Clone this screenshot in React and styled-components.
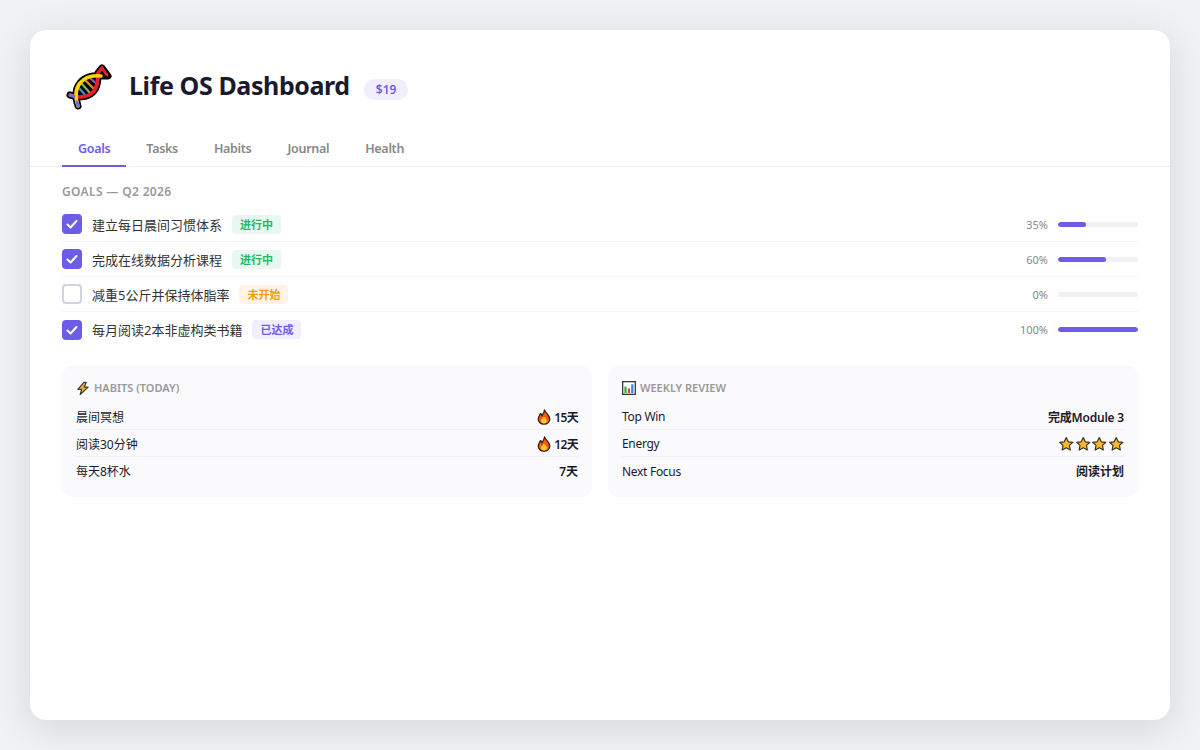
import styled, { createGlobalStyle } from 'styled-components';

const GlobalStyle = createGlobalStyle`
  * {
    box-sizing: border-box;
  }
  html, body {
    margin: 0;
    height: 100%;
  }
  body {
    font-family: 'Noto Sans', 'Noto Sans CJK SC', sans-serif;
    background: #f0f2f5;
    color: #1a1a2e;
  }
`;

const Page = styled.div`
  height: 750px;
  padding: 30px;
  background: #f0f2f5;
`;

const Card = styled.div`
  height: 690px;
  background: #fff;
  border-radius: 16px;
  box-shadow: 0 8px 40px rgba(0, 0, 0, 0.12);
  padding-top: 32px;
`;

const Header = styled.div`
  display: flex;
  align-items: center;
  gap: 14px;
  padding: 0 32px;
  height: 50px;
`;

const LogoWrap = styled.span`
  display: flex;
  flex: none;
  width: 56px;
  margin-top: 2px;
  margin-left: -2px;
  margin-right: -1px;
`;

const Title = styled.h1`
  margin: 0 0 4px;
  font-size: 25px;
  font-weight: 700;
  letter-spacing: -0.4px;
  color: #1a1a2e;
`;

const Price = styled.span`
  margin-top: 4px;
  padding: 2px 12px;
  border-radius: 20px;
  background: #f0eeff;
  color: #6c5ce7;
  font-size: 12px;
  font-weight: 600;
`;

const Tabs = styled.div`
  display: flex;
  margin-top: 20px;
  padding: 0 32px;
  border-bottom: 1px solid #eeeef4;
`;

const Tab = styled.div`
  padding: 8px 16px;
  margin-right: 4px;
  margin-bottom: -1px;
  font-size: 12.5px;
  font-weight: 600;
  letter-spacing: -0.3px;
  color: ${(p) => (p.$active ? '#6c5ce7' : '#888')};
  border-bottom: 2px solid ${(p) => (p.$active ? '#6c5ce7' : 'transparent')};
`;

const Content = styled.div`
  padding: 17px 32px 0;
`;

const SectionLabel = styled.div`
  font-size: 12px;
  font-weight: 600;
  letter-spacing: 0.35px;
  color: #999;
  line-height: 16px;
  margin-bottom: 7px;
`;

const GoalList = styled.div`
  display: flex;
  flex-direction: column;
`;

const GoalRow = styled.div`
  display: flex;
  align-items: center;
  height: 35px;
  border-bottom: 1px solid #f5f5f8;
  &:last-child {
    border-bottom: none;
  }
`;

const Check = styled.span`
  display: flex;
  align-items: center;
  justify-content: center;
  width: 20px;
  height: 20px;
  border-radius: 4px;
  margin-right: 10px;
  background: ${(p) => (p.$done ? '#6c5ce7' : '#fff')};
  border: 2px solid ${(p) => (p.$done ? '#6c5ce7' : '#d0d4e0')};
`;

const GoalName = styled.span`
  font-size: 13px;
  color: #333;
`;

const Status = styled.span`
  margin-left: 10px;
  padding: 2px 8px;
  border-radius: 4px;
  font-size: 11px;
  line-height: 15px;
  font-weight: 600;
  color: ${(p) => p.$color};
  background: ${(p) => p.$bg};
`;

const Percent = styled.span`
  margin-left: auto;
  font-size: 11px;
  color: #888;
`;

const Track = styled.div`
  width: 80px;
  height: 5px;
  margin-left: 10px;
  border-radius: 3px;
  background: #f0f0f5;
  overflow: hidden;
`;

const Fill = styled.div`
  height: 100%;
  border-radius: 3px;
  background: #6c5ce7;
`;

const Panels = styled.div`
  display: grid;
  grid-template-columns: 1fr 1fr;
  gap: 16px;
  margin-top: 19px;
`;

const Panel = styled.div`
  background: #fafafc;
  border-radius: 10px;
  padding: 14px;
  height: 131px;
`;

const PanelTitle = styled.div`
  display: flex;
  align-items: center;
  gap: 4px;
  font-size: 11px;
  font-weight: 600;
  color: #999;
  line-height: 16px;
  margin-bottom: 7px;
`;

const PanelRow = styled.div`
  display: flex;
  justify-content: space-between;
  align-items: center;
  height: 27px;
  padding-top: 1px;
  font-size: 12px;
  color: #1a1a2e;
  border-bottom: 1px solid #f0f0f5;
  &:last-child {
    border-bottom: none;
  }
`;

const RowLabel = styled.span`
  letter-spacing: ${(p) => (p.$tight ? '-0.3px' : '0')};
`;

const PanelValue = styled.span`
  display: flex;
  align-items: center;
  gap: 3px;
  font-weight: 600;
  letter-spacing: ${(p) => p.$spacing || '0'};
`;

const Stars = styled.span`
  display: flex;
`;

const DnaIcon = () => (
  <svg width="56" height="56" viewBox="0 0 56 56" fill="none" strokeLinecap="round" strokeLinejoin="round">
    <path
      d="M10 35 C17 38 27 38 33 32 C38 27 38 19 38 13 L42 8 L48 16 L40 16 C33 15 25 17 20 23 C15 29 15 37 18 46"
      fill="#000"
      stroke="#000"
      strokeWidth="7"
    />
    <g strokeWidth="2.200">
      <path d="M19 28 L26 36" stroke="#3f8fe0" />
      <path d="M22 24 L30 33" stroke="#7cc04a" />
      <path d="M26 21 L34 29" stroke="#f28c28" />
      <path d="M31 19 L37 24" stroke="#8e5bc4" />
    </g>
    <path d="M10 35 C17 38 27 38 33 32 C38 27 38 19 38 13 L42 8" stroke="#e8202a" strokeWidth="3.600" />
    <path d="M42 8 L47 15" stroke="#e8202a" strokeWidth="2.800" />
    <path d="M18 46 C15 37 15 29 20 23 C25 17 33 15 41 16" stroke="#ffd400" strokeWidth="3.600" />
    <path d="M10 35 L14 36.300" stroke="#6a6fd8" strokeWidth="3" />
    <path d="M18 46 L17 42" stroke="#6a6fd8" strokeWidth="3" />
  </svg>
);

const BoltIcon = () => (
  <svg width="14" height="15" viewBox="0 0 15 15">
    <path d="M8.500 1 L2 8.500 L6 8.500 L4.500 14 L13 6 L8.800 6 L11 1 Z" fill="#f7b32b" stroke="#3a3a3a" strokeWidth="1.300" strokeLinejoin="round" />
  </svg>
);

const ChartIcon = () => (
  <svg width="14" height="14" viewBox="0 0 15 15">
    <rect x="0.700" y="0.700" width="13.600" height="13.600" fill="#fff" stroke="#3a3a3a" strokeWidth="1.400" />
    <rect x="2.500" y="6" width="2.500" height="7" fill="#3fae49" />
    <rect x="6.200" y="8" width="2.500" height="5" fill="#e8432e" />
    <rect x="9.800" y="3.500" width="2.500" height="9.500" fill="#2f8fdc" />
  </svg>
);

const FireIcon = () => (
  <svg width="14" height="16" viewBox="0 0 14 16">
    <path d="M7.500 0.800 C8 4 12.800 5.500 12.800 10 C12.800 13.200 10.200 15.200 7 15.200 C3.800 15.200 1.200 13.200 1.200 10 C1.200 7.500 2.800 6.500 3.500 4.500 C4.500 5.200 4.800 6 5 6.800 C6.200 5 7.500 3.200 7.500 0.800 Z" fill="#ef5a14" stroke="#2a1a10" strokeWidth="1.200" strokeLinejoin="round" />
    <path d="M7 7.500 C7.500 9 10 10 10 12 C10 13.500 8.500 14.500 7 14.500 C5.500 14.500 4 13.500 4 12 C4 10 6 9.500 7 7.500 Z" fill="#ffc928" />
  </svg>
);

const StarIcon = () => (
  <svg width="16.500" height="16" viewBox="0 0 16.500 16">
    <path d="M8.250 1.500 L10.250 5.800 L14.850 6.300 L11.450 9.400 L12.350 14 L8.250 11.700 L4.150 14 L5.050 9.400 L1.650 6.300 L6.250 5.800 Z" fill="#fdb92c" stroke="#3a3226" strokeWidth="1.200" strokeLinejoin="round" />
  </svg>
);

const goals = [
  { name: '建立每日晨间习惯体系', status: '进行中', tone: 'green', pct: 35, done: true },
  { name: '完成在线数据分析课程', status: '进行中', tone: 'green', pct: 60, done: true },
  { name: '减重5公斤并保持体脂率', status: '未开始', tone: 'orange', pct: 0, done: false },
  { name: '每月阅读2本非虚构类书籍', status: '已达成', tone: 'purple', pct: 100, done: true },
];

const tones = {
  green: { color: '#22b866', bg: '#e8f8f0' },
  orange: { color: '#f39c12', bg: '#fff3e8' },
  purple: { color: '#6c5ce7', bg: '#f0eeff' },
};

const tabs = ['Goals', 'Tasks', 'Habits', 'Journal', 'Health'];

export default function App() {
  return (
    <Page>
      <GlobalStyle />
      <Card>
        <Header>
          <LogoWrap><DnaIcon /></LogoWrap>
          <Title>Life OS Dashboard</Title>
          <Price>$19</Price>
        </Header>
        <Tabs>
          {tabs.map((t, i) => (
            <Tab key={t} $active={i === 0}>{t}</Tab>
          ))}
        </Tabs>
        <Content>
          <SectionLabel>GOALS — Q2 2026</SectionLabel>
          <GoalList>
            {goals.map((g) => (
              <GoalRow key={g.name}>
                <Check $done={g.done}>
                  {g.done && (
                    <svg width="14" height="14" viewBox="0 0 14 14" fill="none">
                      <path d="M2.500 7.500l3 3 6-6.500" stroke="#fff" strokeWidth="2" strokeLinecap="round" strokeLinejoin="round" />
                    </svg>
                  )}
                </Check>
                <GoalName>{g.name}</GoalName>
                <Status $color={tones[g.tone].color} $bg={tones[g.tone].bg}>{g.status}</Status>
                <Percent>{g.pct}%</Percent>
                <Track>
                  <Fill style={{ width: `${g.pct}%` }} />
                </Track>
              </GoalRow>
            ))}
          </GoalList>
          <Panels>
            <Panel>
              <PanelTitle><BoltIcon />HABITS (TODAY)</PanelTitle>
              <PanelRow><RowLabel>晨间冥想</RowLabel><PanelValue $spacing="-0.7px"><FireIcon />15天</PanelValue></PanelRow>
              <PanelRow><RowLabel>阅读30分钟</RowLabel><PanelValue $spacing="-0.7px"><FireIcon />12天</PanelValue></PanelRow>
              <PanelRow><RowLabel>每天8杯水</RowLabel><PanelValue>7天</PanelValue></PanelRow>
            </Panel>
            <Panel>
              <PanelTitle><ChartIcon />WEEKLY REVIEW</PanelTitle>
              <PanelRow><RowLabel $tight>Top Win</RowLabel><PanelValue $spacing="-0.2px">完成Module 3</PanelValue></PanelRow>
              <PanelRow>
                <RowLabel $tight>Energy</RowLabel>
                <Stars><StarIcon /><StarIcon /><StarIcon /><StarIcon /></Stars>
              </PanelRow>
              <PanelRow><RowLabel $tight>Next Focus</RowLabel><PanelValue>阅读计划</PanelValue></PanelRow>
            </Panel>
          </Panels>
        </Content>
      </Card>
    </Page>
  );
}
